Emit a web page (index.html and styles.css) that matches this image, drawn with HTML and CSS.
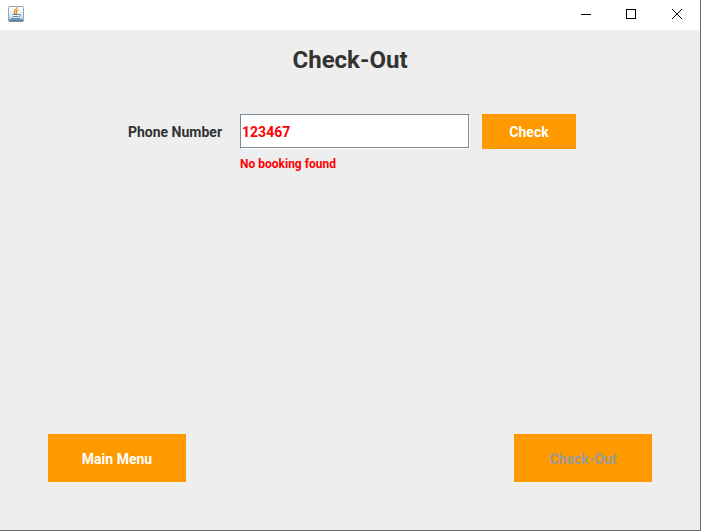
FILE: index.html
```html
<!DOCTYPE html>
<html lang="en">
<head>
<meta charset="utf-8">
<title>Check-Out</title>
<link rel="stylesheet" href="styles.css">
</head>
<body>
<div class="window">
  <header class="titlebar">
    <svg class="app-icon" viewBox="0 0 16 16" aria-hidden="true">
      <defs>
        <linearGradient id="face" x1="0" y1="0" x2="0" y2="1">
          <stop offset="0" stop-color="#ffffff"/>
          <stop offset=".6" stop-color="#e2e9ef"/>
          <stop offset="1" stop-color="#9db6cb"/>
        </linearGradient>
      </defs>
      <rect x=".5" y=".5" width="15" height="15" rx="1" fill="url(#face)" stroke="#8fa6b8"/>
      <path d="M1 14.5h14" stroke="#4f7fa3" stroke-width="2"/>
      <path d="M8.7 1.2c.8 2.4-3.6 3-2.2 5.2l1.2 1.7M10.3 3.8c-2 .9-2.7 1.7-1.6 2.9.5.6.2 1-.4 1.5" fill="none" stroke="#f08418" stroke-width="1.2"/>
      <path d="M4.5 8.5h6.2c0 2-.5 3-1.2 3.5H5.8c-.8-.5-1.3-1.500-1.300-3.500z" fill="#f5f8fa"/>
      <path d="M4.500 8.500h6.200M5 10.500h5M3.500 12.500h8.500M11 8.500c2.200-.4 1.900 1.800-.3 2.200" fill="none" stroke="#5482a6"/>
    </svg>
    <div class="window-controls">
      <button class="window-button" type="button" aria-label="Minimize">
        <svg viewBox="0 0 10 10" shape-rendering="crispEdges"><path d="M1 5.5h10"/></svg>
      </button>
      <button class="window-button" type="button" aria-label="Maximize">
        <svg viewBox="0 0 10 10" shape-rendering="crispEdges"><path d="M.5.5h9v9h-9z"/></svg>
      </button>
      <button class="window-button" type="button" aria-label="Close">
        <svg viewBox="0 0 10 10"><path d="M0 0l10 10M10 0L0 10"/></svg>
      </button>
    </div>
  </header>
  <main class="content">
    <h1 class="title">Check-Out</h1>
    <form class="lookup">
      <label class="label" for="phone">Phone Number</label>
      <input class="field" id="phone" type="text" value="123467" aria-describedby="phone-message">
      <button class="button" type="button">Check</button>
      <p class="message" id="phone-message">No booking found</p>
    </form>
    <footer class="actions">
      <button class="button button-large" type="button">Main Menu</button>
      <button class="button button-large" type="button" disabled>Check-Out</button>
    </footer>
  </main>
</div>
</body>
</html>
```
FILE: styles.css
```css
* {
  box-sizing: border-box;
}

body {
  margin: 0;
  font-family: Roboto, "Liberation Sans", sans-serif;
  font-weight: 700;
  color: #333;
}

.window {
  display: flex;
  flex-direction: column;
  min-height: 100vh;
  background: #eee;
  border-right: 1px solid #6b6b6b;
  border-bottom: 1px solid #6b6b6b;
}

.titlebar {
  display: flex;
  align-items: center;
  justify-content: space-between;
  height: 30px;
  padding: 0 0 2px 8px;
  background: #fff;
}

.app-icon {
  width: 16px;
  height: 16px;
}

.window-controls {
  display: flex;
}

.window-button {
  display: grid;
  place-items: center;
  width: 46px;
  height: 28px;
  padding: 0;
  background: none;
  border: 0;
}

.window-button svg {
  width: 10px;
  height: 10px;
  overflow: visible;
  fill: none;
  stroke: #000;
}

.content {
  display: flex;
  flex: 1;
  flex-direction: column;
  padding: 14px 48px 48px;
}

.title {
  margin: 0;
  font-size: 24px;
  line-height: 32px;
  text-align: center;
}

.lookup {
  display: grid;
  grid-template-columns: auto 230px 94px;
  column-gap: 12px;
  align-items: center;
  justify-content: center;
  padding: 38px 0 0 4px;
}

.label {
  padding-right: 6px;
  font-size: 14px;
  text-align: right;
}

.field {
  width: 100%;
  height: 35px;
  padding: 0 1px;
  font: inherit;
  font-size: 14px;
  color: #f00;
  background: #fff;
  border: 1px solid #7a8a99;
  border-right-color: #fff;
  border-bottom-color: #fff;
  border-radius: 0;
  box-shadow: inset -1px -1px #7a8a99;
  outline: 0;
}

.button {
  height: 35px;
  padding: 0;
  font: inherit;
  font-size: 14px;
  color: #fff;
  background: #ff9900;
  border: 0;
}

.button:disabled {
  color: #999;
}

.message {
  grid-column: 2 / -1;
  margin: 7px 0 0;
  font-size: 12px;
  line-height: 16px;
  color: #f00;
}

.actions {
  display: flex;
  justify-content: space-between;
  margin-top: auto;
}

.button-large {
  width: 138px;
  height: 48px;
  padding-top: 2px;
}
```
